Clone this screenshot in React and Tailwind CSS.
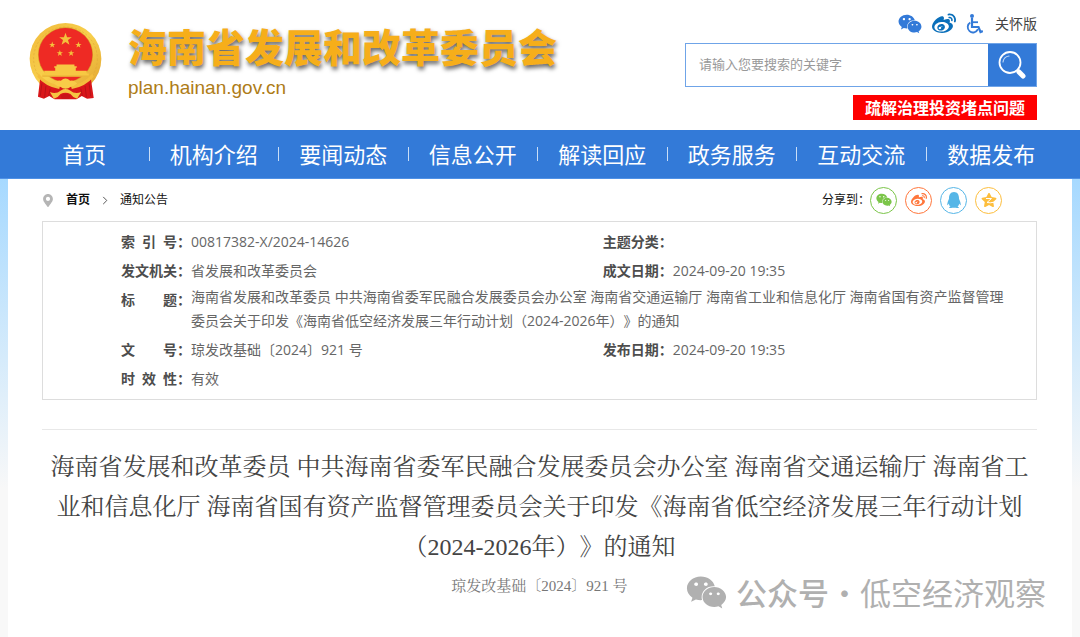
import { useState } from "react";
import { FaWeixin, FaWeibo, FaQq, FaMapMarkerAlt, FaStar } from "react-icons/fa";

const navItems = ["首页", "机构介绍", "要闻动态", "信息公开", "解读回应", "政务服务", "互动交流", "数据发布"];

const STAR = "M0 -10 L2.4 -3.1 L9.5 -3.1 L3.8 1.2 L5.9 8.1 L0 4 L-5.9 8.1 L-3.8 1.2 L-9.5 -3.1 L-2.4 -3.1 Z";

function Emblem() {
  return (
    <svg viewBox="42 38 218 232" className="h-[77px] w-[73px] shrink-0" role="img" aria-label="国徽">
      <defs>
        <linearGradient id="gold" x1="0" y1="0" x2="1" y2="1">
          <stop offset="0" stopColor="#f0b93a" />
          <stop offset="0.5" stopColor="#f8d04d" />
          <stop offset="1" stopColor="#e0a02c" />
        </linearGradient>
      </defs>
      {/* wheat ring */}
      <circle cx="151" cy="146" r="108" fill="url(#gold)" />
      <circle cx="151" cy="146" r="96" fill="none" stroke="#dda236" strokeWidth="3" strokeDasharray="7 5" opacity="0.5" />
      <circle cx="151" cy="134" r="83" fill="#d99a28" />
      <circle cx="151" cy="134" r="81" fill="#ee2a24" />
      {/* stars */}
      <g fill="#f4c13c">
        <path d={STAR} transform="translate(151 87) scale(2)" />
        <path d={STAR} transform="translate(111 104)" />
        <path d={STAR} transform="translate(190 104)" />
        <path d={STAR} transform="translate(134 129)" />
        <path d={STAR} transform="translate(168 129)" />
      </g>
      {/* gate tower */}
      <g fill="#f7c843">
        <path d="M124 163h54v5h7v5h-3v9h33v8h6v10H81v-10h6v-8h33v-9h-3v-5h7z" />
      </g>
      <path d="M81 198h140" stroke="#dfa22d" strokeWidth="2" />
      {/* ribbons */}
      <path d="M75 203 Q100 226 151 232 Q202 226 227 203 L236 264 L216 266 L200 258 L184 268 H118 L102 258 L86 266 L68 260 Z" fill="#d9161a" />
      <path d="M80 220l-5 38M92 228l-4 34M105 236l-5 22M222 220l5 38M210 228l4 34M197 236l5 22" stroke="#b81217" strokeWidth="3" />
      <path d="M70 190 Q96 222 135 226 L132 237 Q91 230 66 200 Z" fill="#f3bd3d" />
      <path d="M232 190 Q206 222 167 226 L170 237 Q211 230 236 200 Z" fill="#f3bd3d" />
      <path d="M116 220 Q126 209 137 212 Q151 198 165 212 Q176 209 186 220 Q176 229 168 229 Q151 243 134 229 Q126 229 116 220 Z" fill="#f8cb48" />
      <path d="M104 246 Q123 253 137 241 Q151 233 165 241 Q179 253 198 246 L186 266 Q172 262 166 252 Q151 244 136 252 Q130 262 116 266 Z" fill="#f5c543" />
      <path d="M136 256 Q151 248 166 256 L162 267 H140 Z" fill="#c91419" />
    </svg>
  );
}

function SearchIcon() {
  return (
    <svg viewBox="0 0 28 28" className="h-7 w-7" fill="none" aria-hidden="true">
      <circle cx="12" cy="11.5" r="10.5" stroke="#fff" strokeWidth="1.8" />
      <path d="M5 11a7 7 0 0 1 6-6" stroke="#bcd5f5" strokeWidth="1.2" strokeLinecap="round" />
      <path d="M19 18.5l2 2" stroke="#fff" strokeWidth="2" />
      <path d="M21 21l4 4" stroke="#fff" strokeWidth="5" strokeLinecap="round" />
    </svg>
  );
}

function Wheelchair() {
  return (
    <svg viewBox="0 0 17 20" className="h-5 w-[17px]" fill="none" stroke="currentColor" strokeWidth="2.2" aria-hidden="true">
      <circle cx="6" cy="2" r="2" fill="currentColor" stroke="none" />
      <path d="M6 4v9h6.5l2 5 2.3-.9" />
      <path d="M6 8.2h6" strokeWidth="1.8" />
      <path d="M4.3 8.6a5.3 5.3 0 1 0 7.6 6.6" strokeWidth="1.8" />
    </svg>
  );
}

function Qzone() {
  return (
    <span className="grid place-items-center">
      <FaStar className="col-start-1 row-start-1 h-4 w-4" />
      <svg viewBox="0 0 16 16" className="col-start-1 row-start-1 h-4 w-4" fill="none" stroke="#fff" strokeWidth="1" aria-hidden="true">
        <path d="M5 6.5h5.5L6 10.5q3 .8 7-.3" />
      </svg>
    </span>
  );
}

function Label({ children }) {
  return (
    <th scope="row" className="w-[70px] whitespace-nowrap p-0 text-left align-top font-bold text-[#4d4d4d]">
      <span className="inline-block w-14 [text-align-last:justify]">{children}</span>：
    </th>
  );
}

export default function App() {
  const [keyword, setKeyword] = useState("");

  return (
    <div className="relative flex min-h-screen flex-col overflow-x-hidden bg-white font-['Open_Sans','Noto_Sans_CJK_SC',sans-serif] [text-spacing-trim:space-all]">
      {/* Header */}
      <header className="flex h-[130px] justify-between pl-[29px] pr-[43px]">
        <div className="flex gap-[26px] pt-[23px]">
          <Emblem />
          <div>
            <h1 className="whitespace-nowrap font-['Noto_Sans_CJK_SC',sans-serif] text-[39px] font-black leading-[44px] text-[#f6ae1a] [text-shadow:1px_3px_4px_rgba(0,0,0,0.6)]">
              海南省发展和改革委员会
            </h1>
            <p className="mt-1 font-['Liberation_Sans',sans-serif] text-[19px] leading-[34px] text-[#ae7c17]">plan.hainan.gov.cn</p>
          </div>
        </div>

        <div className="flex w-[352px] flex-col items-end">
          <div className="flex h-[43px] items-center gap-[10px] pt-1 text-[#337ad8]">
            <a href="#wechat" aria-label="微信"><FaWeixin className="h-6 w-6" /></a>
            <a href="#weibo" aria-label="微博"><FaWeibo className="h-6 w-6 text-[#0a6fba]" /></a>
            <a href="#care" className="flex items-center gap-3">
              <Wheelchair />
              <span className="text-sm text-[#444]">关怀版</span>
            </a>
          </div>
          <form className="flex h-11 w-full border border-[#6fa4e8]" onSubmit={(e) => e.preventDefault()}>
            <input
              type="text"
              aria-label="搜索关键字"
              placeholder="请输入您要搜索的关键字"
              value={keyword}
              onChange={(e) => setKeyword(e.target.value)}
              className="min-w-0 flex-1 px-[13px] text-[13px] text-[#333] outline-none placeholder:text-[#999]"
            />
            <button type="submit" aria-label="搜索" className="flex w-12 items-center justify-center bg-[#337ad8]">
              <SearchIcon />
            </button>
          </form>
          <a href="#issues" className="mt-2 h-[25px] bg-[#fe0000] px-3 text-base font-bold leading-[26px] text-white">
            疏解治理投资堵点问题
          </a>
        </div>
      </header>

      {/* Main nav */}
      <nav className="grid h-[49px] grid-cols-8 items-center border-b border-[#4f91e6] bg-[#337ad8] pl-5 pr-6">
        {navItems.map((item, i) => (
          <div key={item} className="flex items-center">
            <a href="#nav" className="flex-1 whitespace-nowrap text-center text-[22px] leading-8 text-white">{item}</a>
            {i < navItems.length - 1 && <span className="h-[14px] w-px bg-[#c9def7]" />}
          </div>
        ))}
      </nav>

      <div className="flex flex-1 flex-col bg-[#f8f8f8] bg-[linear-gradient(#a6d9ff_0px,#f8f8f8_310px)] px-2">
        <main className="flex-1 bg-white pl-[34px] pr-[35px]">
          {/* Breadcrumb + share */}
          <div className="flex h-[42px] items-center justify-between pr-[35px] text-xs text-[#111]">
            <div className="flex items-center">
              <FaMapMarkerAlt className="h-[13px] w-3 text-[#b5b5b5]" />
              <a href="#home" className="ml-3 font-bold">首页</a>
              <svg viewBox="0 0 6 10" className="mx-3 h-[9px] w-[6px]" fill="none" stroke="#444" aria-hidden="true">
                <path d="M1 1l4 4-4 4" />
              </svg>
              <a href="#notice">通知公告</a>
            </div>
            <div className="flex items-center">
              <span>分享到：</span>
              <div className="flex gap-2">
                <a href="#s1" aria-label="微信" className="flex h-[27px] w-[27px] items-center justify-center rounded-full border border-[#7bc549] text-[#7bc549]">
                  <FaWeixin className="h-4 w-4" />
                </a>
                <a href="#s2" aria-label="微博" className="flex h-[27px] w-[27px] items-center justify-center rounded-full border border-[#ff763b] text-[#ff763b]">
                  <FaWeibo className="h-4 w-4" />
                </a>
                <a href="#s3" aria-label="QQ" className="flex h-[27px] w-[27px] items-center justify-center rounded-full border border-[#56b6e7] text-[#56b6e7]">
                  <FaQq className="h-4 w-4" />
                </a>
                <a href="#s4" aria-label="QQ空间" className="flex h-[27px] w-[27px] items-center justify-center rounded-full border border-[#fdbe3d] text-[#fdbe3d]">
                  <Qzone />
                </a>
              </div>
            </div>
          </div>

          {/* Document info */}
          <div className="border border-[#ddd] pb-[6px] pl-[78px] pt-[5px]">
            <table className="w-full table-fixed text-sm leading-[29px] text-[#666]">
              <tbody>
                <tr>
                  <Label>索 引 号</Label>
                  <td className="w-[45%] p-0">00817382-X/2024-14626</td>
                  <Label>主题分类</Label>
                  <td className="p-0"></td>
                </tr>
                <tr>
                  <Label>发文机关</Label>
                  <td className="p-0">省发展和改革委员会</td>
                  <Label>成文日期</Label>
                  <td className="p-0">2024-09-20 19:35</td>
                </tr>
                <tr>
                  <Label>标 题</Label>
                  <td colSpan={3} className="pb-[2px] pr-6 leading-6">
                    海南省发展和改革委员 中共海南省委军民融合发展委员会办公室 海南省交通运输厅 海南省工业和信息化厅 海南省国有资产监督管理委员会关于印发《海南省低空经济发展三年行动计划（2024-2026年）》的通知
                  </td>
                </tr>
                <tr>
                  <Label>文 号</Label>
                  <td className="p-0">琼发改基础〔2024〕921 号</td>
                  <Label>发布日期</Label>
                  <td className="p-0">2024-09-20 19:35</td>
                </tr>
                <tr>
                  <Label>时 效 性</Label>
                  <td className="p-0">有效</td>
                </tr>
              </tbody>
            </table>
          </div>

          {/* Article title */}
          <article className="mt-[29px] border-t border-[#e8e8e8] pt-[17px] text-center font-['Liberation_Serif','Noto_Serif_CJK_SC','Noto_Sans_CJK_SC',serif]">
            <h2 className="text-2xl font-normal leading-10 text-[#444]">
              海南省发展和改革委员 中共海南省委军民融合发展委员会办公室 海南省交通运输厅 海南省工
              <br />
              业和信息化厅 海南省国有资产监督管理委员会关于印发《海南省低空经济发展三年行动计划
              <br />
              （2024-2026年）》的通知
            </h2>
            <p className="pb-5 text-[15px] leading-[38px] text-[#777]">琼发改基础〔2024〕921 号</p>
          </article>
        </main>
      </div>

      {/* Watermark */}
      <div className="pointer-events-none absolute bottom-[25px] right-[34px] flex h-10 items-center whitespace-nowrap font-['Noto_Sans_CJK_SC',sans-serif] text-[31px] text-[#b0b0b0]">
        <FaWeixin className="mr-[9px] h-[41px] w-[41px]" />
        <span className="font-medium">公众号</span>
        <span className="w-[31px] text-center">·</span>
        <span>低空经济观察</span>
      </div>
    </div>
  );
}
